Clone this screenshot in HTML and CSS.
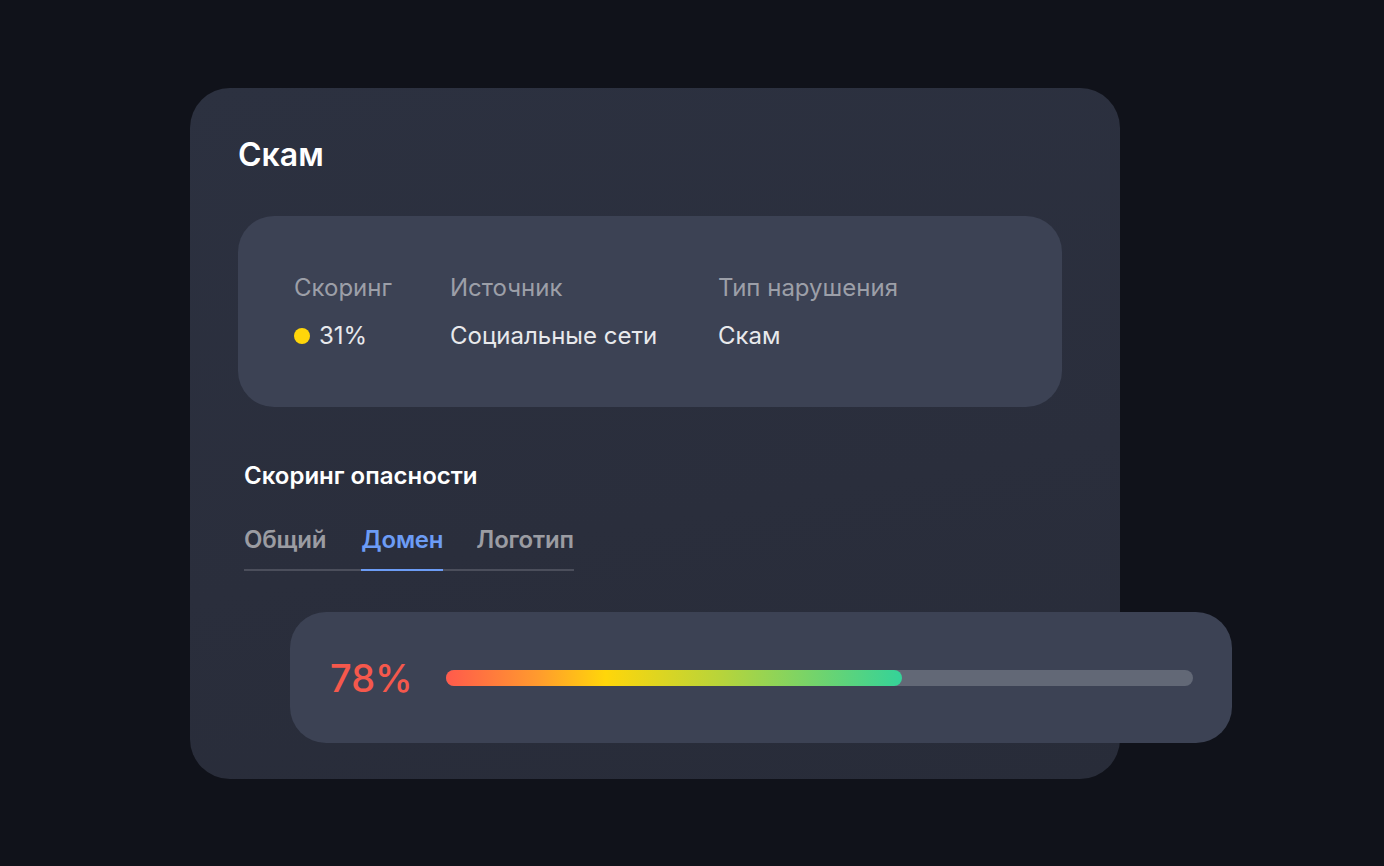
FILE: index.html
```html
<!DOCTYPE html>
<html>
<head>
    <title>Скам</title>
    <link rel="stylesheet" href="styles.css">
</head>
<body>
    <div class="card">
        <h1 class="card-title">Скам</h1>
        <div class="info">
            <div class="info-col col-score">
                <div class="info-label">Скоринг</div>
                <div class="info-value"><span class="dot"></span>31%</div>
            </div>
            <div class="info-col col-source">
                <div class="info-label">Источник</div>
                <div class="info-value">Социальные сети</div>
            </div>
            <div class="info-col">
                <div class="info-label">Тип нарушения</div>
                <div class="info-value">Скам</div>
            </div>
        </div>
        <h2 class="section-title">Скоринг опасности</h2>
        <div class="tabs">
            <div class="tab">Общий</div>
            <div class="tab active">Домен</div>
            <div class="tab">Логотип</div>
        </div>
        <div class="score-panel">
            <div class="score-value">78%</div>
            <div class="bar">
                <div class="bar-fill" style="width: 61%"></div>
            </div>
        </div>
    </div>
</body>
</html>
```

FILE: styles.css
```css
body {
    margin: 0;
    height: 866px;
    background-color: #10121a;
    font-family: Inter, "Noto Sans", sans-serif;
    overflow: hidden;
}
.card {
    box-sizing: border-box;
    width: 930px;
    height: 691px;
    margin: 88px 0 0 190px;
    padding: 45px 58px 0 48px;
    border-radius: 40px;
    background: linear-gradient(170deg, #2c3140 0%, #2a2e3c 60%, #282c39 100%);
}
.card-title {
    margin: 0;
    font-size: 32px;
    line-height: 44px;
    font-weight: 600;
    color: #ffffff;
}
.info {
    display: flex;
    margin-top: 39px;
    height: 191px;
    box-sizing: border-box;
    padding: 58px 56px;
    border-radius: 36px;
    background-color: #3c4254;
}
.info-col {
    display: flex;
    flex-direction: column;
    gap: 20px;
}
.col-score {
    width: 156px;
}
.col-source {
    width: 268px;
}
.info-label {
    font-size: 24px;
    line-height: 28px;
    color: #9c9fa8;
}
.info-value {
    display: flex;
    align-items: center;
    font-size: 24px;
    line-height: 28px;
    color: #e8e9ec;
}
.dot {
    width: 16px;
    height: 16px;
    margin-right: 9px;
    border-radius: 50%;
    background-color: #ffd60a;
}
.section-title {
    margin: 55px 0 0 6px;
    font-size: 24px;
    line-height: 28px;
    font-weight: 600;
    color: #ffffff;
}
.tabs {
    display: flex;
    width: 330px;
    margin: 36px 0 0 6px;
    border-bottom: 2px solid #4b4e5b;
}
.tab {
    margin-right: 35px;
    padding-bottom: 15px;
    margin-bottom: -2px;
    font-size: 24px;
    line-height: 28px;
    font-weight: 600;
    letter-spacing: -0.2px;
    color: #9b9ca2;
    border-bottom: 2px solid transparent;
}
.tab.active {
    margin-right: 33px;
}
.tab:last-child {
    margin-right: 0;
}
.tab.active {
    color: #6c9cf5;
    border-bottom-color: #6c9cf5;
}
.score-panel {
    display: flex;
    align-items: center;
    box-sizing: border-box;
    width: 942px;
    height: 131px;
    margin: 41px 0 0 52px;
    padding: 0 39px 0 40px;
    border-radius: 36px;
    background-color: #3c4254;
}
.score-value {
    width: 116px;
    font-size: 38px;
    font-weight: 500;
    color: #f5584c;
}
.bar {
    flex: 1;
    height: 16px;
    border-radius: 8px;
    background-color: #626876;
}
.bar-fill {
    height: 100%;
    border-radius: 8px;
    background: linear-gradient(90deg, #ff5a4c 0%, #ff9a2e 20%, #ffd60a 35%, #b8d43a 60%, #34d399 100%);
}
```
